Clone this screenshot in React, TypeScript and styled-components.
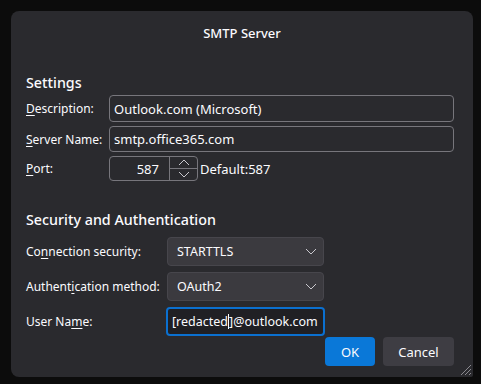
import React from "react"
import styled, { createGlobalStyle } from "styled-components"

const GlobalStyle = createGlobalStyle`
	html, body {
		margin: 0;
		padding: 0;
		background: #0c0c0c;
	}
	body {
		font-family: "Noto Sans", "Open Sans", sans-serif;
		color: #fbfbfe;
	}
`

const Page = styled.div`
	padding: 11px 8px 0 11px;
`

const Dialog = styled.div`
	position: relative;
	width: 462px;
	height: 366px;
	box-sizing: border-box;
	background: #2a2a2e;
	border-radius: 8px 8px 2px 8px;
	padding: 0 19px 0 15px;
	display: flex;
	flex-direction: column;
	font-size: 12px;
`

const Title = styled.div`
	text-align: center;
	font-size: 13px;
	font-weight: 500;
	line-height: 16px;
	padding: 14px 0 0 4px;
`

const Heading = styled.div`
	font-size: 14.3px;
	font-weight: 500;
	line-height: 20px;
	margin-top: ${(p: { top: number }) => p.top}px;
`

const SettingsGrid = styled.div`
	display: grid;
	grid-template-columns: 83px 1fr;
	grid-template-rows: 27px 26px 25px;
	row-gap: 4px;
	align-items: center;
	margin-top: 2px;
`

const SecurityGrid = styled.div`
	display: grid;
	grid-template-columns: 141px 157px;
	grid-template-rows: 29px 29px 29px;
	row-gap: 6px;
	align-items: center;
	margin-top: 7px;
`

const Label = styled.label`
	white-space: nowrap;
	u {
		text-decoration: underline;
		text-underline-offset: 2px;
	}
`

const TextInput = styled.div`
	height: 100%;
	box-sizing: border-box;
	border: 1px solid #77767c;
	border-radius: 4px;
	background: #2a2a2e;
	display: flex;
	align-items: center;
	padding: 0 4px;
	font-size: 13px;
`

const PortRow = styled.div`
	display: flex;
	align-items: center;
	height: 100%;
`

const SpinBox = styled.div`
	width: 89px;
	height: 100%;
	box-sizing: border-box;
	border: 1px solid #77767c;
	border-radius: 4px;
	display: flex;
`

const SpinValue = styled.div`
	flex: 1;
	display: flex;
	align-items: center;
	justify-content: flex-end;
	padding-right: 10px;
	font-size: 13px;
`

const SpinButtons = styled.div`
	width: 27px;
	border-left: 1px solid #77767c;
	display: flex;
	flex-direction: column;
`

const SpinButton = styled.div`
	flex: 1;
	display: flex;
	align-items: center;
	justify-content: center;
	& + & {
		border-top: 1px solid #77767c;
	}
`

const DefaultText = styled.span`
	margin-left: 2px;
	font-size: 13px;
`

const Select = styled.div`
	height: 100%;
	box-sizing: border-box;
	background: #3b3a3f;
	border: 1px solid #47464c;
	border-radius: 4px;
	display: flex;
	align-items: center;
	justify-content: space-between;
	padding: 0 6px 0 9px;
	font-size: 12.5px;
`

const FocusInput = styled.div`
	height: 100%;
	box-sizing: border-box;
	margin-left: -1px;
	width: 159px;
	border: 2px solid #0b70d0;
	border-radius: 4px;
	background: #202024;
	display: flex;
	align-items: center;
	padding: 0 4px;
	white-space: nowrap;
	font-size: 12.5px;
`

const Caret = styled.span`
	display: inline-block;
	width: 1px;
	height: 15px;
	background: #fbfbfe;
	vertical-align: middle;
`

const Buttons = styled.div`
	display: flex;
	justify-content: flex-end;
	gap: 8px;
	margin-top: 1px;
`

const Button = styled.button`
	height: 29px;
	min-width: ${(p: { primary?: boolean }) => (p.primary ? 50 : 71)}px;
	border: none;
	border-radius: 4px;
	font: inherit;
	font-size: 13px;
	color: #fbfbfe;
	background: ${(p: { primary?: boolean }) => (p.primary ? "#0a78d8" : "#3e3d43")};
`

const Grip = styled.svg`
	position: absolute;
	right: 1px;
	bottom: 1px;
`

function Chevron({ up }: { up?: boolean }) {
	return (
		<svg width="12" height="7" viewBox="0 0 12 7">
			<path d={up ? "M1 6 L6 1 L11 6" : "M1 1 L6 6 L11 1"} fill="none" stroke="#c9c8ce" strokeWidth="1" />
		</svg>
	)
}

export default function App() {
	return (
		<Page>
			<GlobalStyle />
			<Dialog>
				<Title>SMTP Server</Title>
				<Heading top={32}>Settings</Heading>
				<SettingsGrid>
					<Label>
						<u>D</u>escription:
					</Label>
					<TextInput>Outlook.com (Microsoft)</TextInput>
					<Label>
						<u>S</u>erver Name:
					</Label>
					<TextInput>smtp.office365.com</TextInput>
					<Label>
						<u>P</u>ort:
					</Label>
					<PortRow>
						<SpinBox>
							<SpinValue>587</SpinValue>
							<SpinButtons>
								<SpinButton>
									<Chevron up />
								</SpinButton>
								<SpinButton>
									<Chevron />
								</SpinButton>
							</SpinButtons>
						</SpinBox>
						<DefaultText>Default:587</DefaultText>
					</PortRow>
				</SettingsGrid>
				<Heading top={29}>Security and Authentication</Heading>
				<SecurityGrid>
					<Label>
						Co<u>n</u>nection security:
					</Label>
					<Select>
						STARTTLS
						<Chevron />
					</Select>
					<Label>
						Authent<u>i</u>cation method:
					</Label>
					<Select>
						OAuth2
						<Chevron />
					</Select>
					<Label>
						User Na<u>m</u>e:
					</Label>
					<FocusInput>
						[redacted
						<Caret />
						]@outlook.com
					</FocusInput>
				</SecurityGrid>
				<Buttons>
					<Button primary>OK</Button>
					<Button>Cancel</Button>
				</Buttons>
				<Grip width="14" height="14" viewBox="0 0 14 14">
					<path d="M13 3 L3 13 M13 7 L7 13 M13 11 L11 13" stroke="#8a898f" strokeWidth="1" />
				</Grip>
			</Dialog>
		</Page>
	)
}
